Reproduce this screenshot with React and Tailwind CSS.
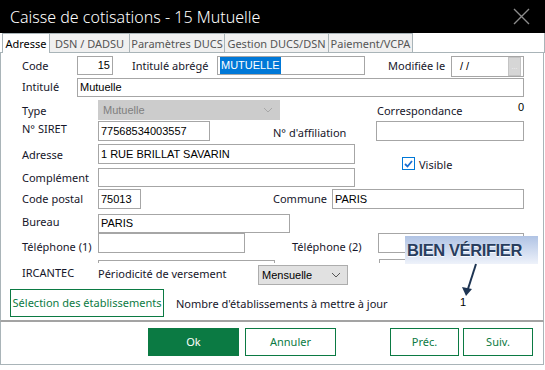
import React from 'react';

const lbl = "shrink-0 h-[16px] text-[11px] leading-[16px] whitespace-nowrap text-[#16162a]";
const base = "shrink-0 flex items-center border px-[2px] text-[11px] leading-none text-black font-['Liberation_Sans',Arial,sans-serif]";
const box = `${base} border-[#a6a6a6] bg-white`;
const greenBtn = "shrink-0 flex items-center justify-center border border-[#0b7a43] bg-white text-[11px] text-[#0b7a43]";

const Chevron = ({ color }) => (
  <svg width="10" height="6" viewBox="0 0 10 6" className="shrink-0">
    <path d="M1 1 L5 5 L9 1" fill="none" stroke={color} strokeWidth="1" />
  </svg>
);

const App = () => {
  return (
    <div className="relative w-[545px] h-[370px] overflow-hidden bg-white font-['Noto_Sans',sans-serif]">
      {/* title bar */}
      <div className="flex h-[33px] items-center justify-between bg-black pl-[10px] pr-[15px]">
        <span className="text-[16px] font-light text-white">Caisse de cotisations - 15 Mutuelle</span>
        <svg width="17" height="17" viewBox="0 0 17 17">
          <path d="M1 1 L16 16 M16 1 L1 16" stroke="#8c8c8c" strokeWidth="1.4" />
        </svg>
      </div>

      {/* tabs */}
      <div className="flex h-[20px] text-[11px] leading-none">
        <div className="w-[2px] border-b border-[#a9b4b8]" />
        <div className="flex w-[48px] items-center justify-center border-l border-r border-t border-[#a9b4b8] bg-white text-black">Adresse</div>
        <div className="flex w-[80px] items-center justify-center border-b border-r border-t border-[#a9b4b8] bg-[#f0f0f0] text-[#555]">DSN / DADSU</div>
        <div className="flex w-[95px] items-center justify-center border-b border-r border-t border-[#a9b4b8] bg-[#f0f0f0] text-[#555]">Paramètres DUCS</div>
        <div className="flex w-[104px] items-center justify-center border-b border-r border-t border-[#a9b4b8] bg-[#f0f0f0] text-[#555]">Gestion DUCS/DSN</div>
        <div className="flex w-[84px] items-center justify-center border-b border-r border-t border-[#a9b4b8] bg-[#f0f0f0] text-[#555]">Paiement/VCPA</div>
        <div className="flex-1 border-b border-r border-[#a9b4b8]" />
      </div>

      {/* panel */}
      <div className="w-[544px] h-[269px] border-l border-r border-b-2 border-l-[#a9b4b8] border-r-[#a9b4b8] border-b-[#a3a3a3] pt-[3px]">
        <div className="flex h-[22px] items-start">
          <span className={`${lbl} ml-[21px] w-[55px] mt-[2px]`}>Code</span>
          <div className={`${box} w-[36px] h-[19px] justify-end`}>15</div>
          <span className={`${lbl} ml-[19px] w-[85px] mt-[2px]`}>Intitulé abrégé</span>
          <div className={`${box} w-[148px] h-[19px] px-[1px]`}>
            <span className="bg-[#0078d7] px-[1px] py-[3px] text-white">MUTUELLE</span>
          </div>
          <span className={`${lbl} ml-[23px] w-[63px] mt-[2px]`}>Modifiée le</span>
          <div className={`${box} w-[73px] h-[21px] justify-between pl-[8px] pr-[2px]`}>
            <span>/ /</span>
            <div className="flex h-[19px] w-[13px] items-center justify-center border border-[#c4c4c4] bg-[#d6d6d6] text-[7px] text-[#f4f4f4]">...</div>
          </div>
        </div>

        <div className="flex h-[20px] items-start">
          <span className={`${lbl} ml-[21px] w-[55px] mt-[1px]`}>Intitulé</span>
          <div className={`${box} w-[447px] h-[19px]`}>Mutuelle</div>
        </div>

        <div className="flex h-[22px] items-start">
          <span className={`${lbl} ml-[21px] w-[76px] mt-[5px]`}>Type</span>
          <div className={`${base} w-[182px] h-[20px] mt-[2px] justify-between border-[#cccccc] bg-[#cccccc] pl-[4px] pr-[6px] text-[#7f7f7f]`}>
            <span className="text-[#7f7f7f]">Mutuelle</span>
            <Chevron color="#a8a8a8" />
          </div>
          <span className={`${lbl} ml-[97px] w-[135px] mt-[5px]`}>Correspondance</span>
          <span className={`${lbl} w-[12px] mt-[1px] text-right font-['Liberation_Sans',sans-serif] text-black`}>0</span>
        </div>

        <div className="flex h-[22px] items-start">
          <span className={`${lbl} ml-[21px] w-[76px] mt-[1px]`}>N° SIRET</span>
          <div className={`${box} w-[112px] h-[20px] mt-[1px]`}>77568534003557</div>
          <span className={`${lbl} ml-[63px] w-[103px] mt-[5px]`}>N° d'affiliation</span>
          <div className={`${box} w-[148px] h-[20px] mt-[1px]`} />
        </div>

        <div className="flex h-[26px] items-start">
          <span className={`${lbl} ml-[21px] w-[76px] mt-[5px]`}>Adresse</span>
          <div className={`${box} w-[257px] h-[20px] mt-[2px]`}>1 RUE BRILLAT SAVARIN</div>
          <div className="ml-[47px] mt-[15px] flex h-[13px] w-[13px] shrink-0 items-center justify-center border border-[#0078d7] bg-white">
            <svg width="9" height="8" viewBox="0 0 9 8">
              <path d="M1 4 L3.5 6.5 L8 1" fill="none" stroke="#1a6fd2" strokeWidth="1.8" />
            </svg>
          </div>
          <span className={`${lbl} ml-[4px] mt-[15px]`}>Visible</span>
        </div>

        <div className="flex h-[21px] items-start">
          <span className={`${lbl} ml-[21px] w-[76px] mt-[2px]`}>Complément</span>
          <div className={`${box} w-[257px] h-[19px]`} />
        </div>

        <div className="flex h-[25px] items-start">
          <span className={`${lbl} ml-[21px] w-[76px] mt-[2px]`}>Code postal</span>
          <div className={`${box} w-[43px] h-[20px]`}>75013</div>
          <span className={`${lbl} ml-[132px] w-[59px] mt-[2px]`}>Commune</span>
          <div className={`${box} w-[192px] h-[20px]`}>PARIS</div>
        </div>

        <div className="flex h-[19px] items-start">
          <span className={`${lbl} ml-[21px] w-[76px]`}>Bureau</span>
          <div className={`${box} w-[192px] h-[19px]`}>PARIS</div>
        </div>

        <div className="flex h-[25px] items-start">
          <span className={`${lbl} ml-[21px] w-[76px] mt-[6px]`}>Téléphone (1)</span>
          <div className={`${box} w-[147px] h-[20px]`} />
          <span className={`${lbl} ml-[47px] w-[86px] mt-[6px]`}>Téléphone (2)</span>
          <div className={`${box} w-[146px] h-[20px]`} />
        </div>

        {/* partly hidden row */}
        <div className="flex h-[5px] items-start">
          <div className="ml-[97px] mt-[2px] h-[3px] w-[177px] shrink-0 border-l border-r border-t border-[#a6a6a6]" />
          <div className="ml-[104px] mt-[1px] h-[4px] w-[146px] shrink-0 border-l border-r border-t border-[#a6a6a6]" />
        </div>

        <div className="flex h-[24px] items-start">
          <span className={`${lbl} ml-[21px] w-[76px] mt-[2px]`}>IRCANTEC</span>
          <span className={`${lbl} w-[160px] mt-[3px]`}>Périodicité de versement</span>
          <div className={`${base} w-[90px] h-[20px] mt-[2px] justify-between border-[#adadad] bg-[#e1e1e1] pl-[3px] pr-[6px]`}>
            <span>Mensuelle</span>
            <Chevron color="#555" />
          </div>
        </div>

        <div className="flex h-[35px] items-start">
          <div className={`${greenBtn} ml-[9px] mt-[2px] h-[28px] w-[154px]`}>Sélection des établissements</div>
          <span className={`${lbl} ml-[12px] w-[284px] mt-[9px]`}>Nombre d'établissements à mettre à jour</span>
          <span className={`${lbl} mt-[7px] font-['Liberation_Sans',sans-serif] text-black`}>1</span>
        </div>
      </div>

      {/* bottom buttons */}
      <div className="flex h-[43px] w-[544px] items-start border-b border-l border-r border-[#a9b4b8] pt-[6px]">
        <div className="ml-[147px] flex h-[28px] w-[91px] shrink-0 items-center justify-center bg-[#0b7a43] text-[11px] text-white">Ok</div>
        <div className={`${greenBtn} ml-[6px] h-[28px] w-[91px]`}>Annuler</div>
        <div className={`${greenBtn} ml-[54px] h-[28px] w-[69px]`}>Préc.</div>
        <div className={`${greenBtn} ml-[4px] h-[28px] w-[70px]`}>Suiv.</div>
      </div>

      {/* annotation */}
      <div className="absolute left-[405px] top-[236px] flex h-[28px] w-[133px] items-center bg-gradient-to-b from-[#b0c3e4] to-[#eef2fa] pl-[2px]">
        <span className="font-['Liberation_Sans',Arial,sans-serif] text-[16.5px] font-bold tracking-[-0.4px] text-[#283d5e] [text-shadow:0_1px_1px_#ffffff]">BIEN VÉRIFIER</span>
      </div>
      <svg className="absolute left-[458px] top-[262px]" width="24" height="36" viewBox="0 0 24 36">
        <path d="M18 2 L9 30" stroke="#1e3553" strokeWidth="2" />
        <path d="M4 25 L8 34 L14 27 Z" fill="#1e3553" />
      </svg>
    </div>
  );
};

export default App;
